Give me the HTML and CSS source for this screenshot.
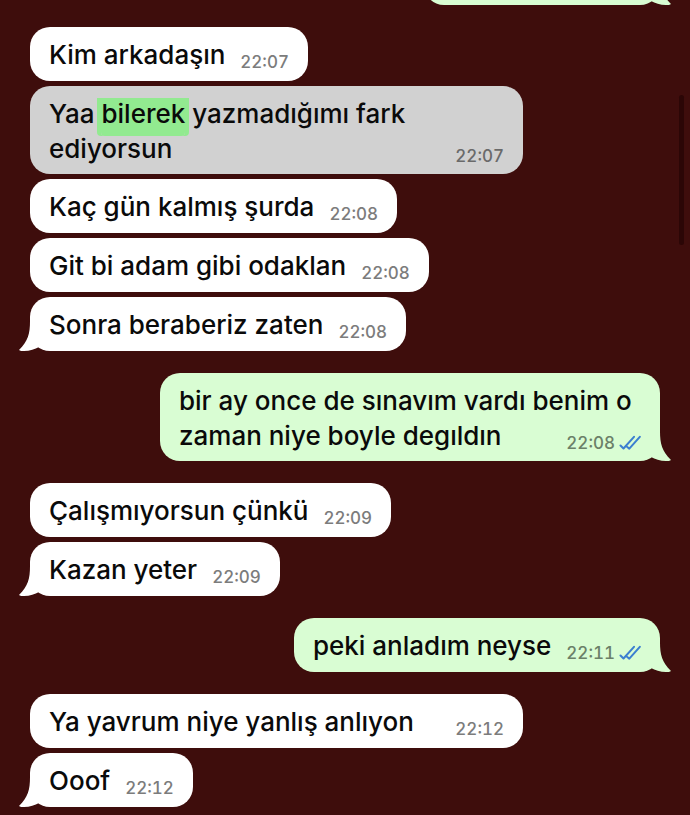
FILE: index.html
```
<!DOCTYPE html>
<html lang="tr">
<head>
    <meta charset="UTF-8" />
    <meta name="viewport" content="width=device-width, initial-scale=1.0" />
    <title>Sohbet</title>
    <link rel="stylesheet" href="styles.css">
</head>
<body>
    <svg class="defs" aria-hidden="true">
        <symbol id="ticks" viewBox="0 0 22 16">
            <path d="M1.5 10.5 L4.5 13.5 L15 1.8 M8.3 12 L10.3 13.7 L20.8 1.8" />
        </symbol>
    </svg>

    <main class="chat">
        <!-- Scrolled out message -->
        <div class="bubble sent tail scrolled" aria-hidden="true"></div>

        <div class="group">
            <div class="bubble">Kim arkadaşın<time>22:07</time></div>
            <div class="bubble selected">Yaa <mark>bilerek</mark> yazmadığımı fark ediyorsun<time>22:07</time></div>
            <div class="bubble">Kaç gün kalmış şurda<time>22:08</time></div>
            <div class="bubble">Git bi adam gibi odaklan<time>22:08</time></div>
            <div class="bubble tail">Sonra beraberiz zaten<time>22:08</time></div>
        </div>

        <div class="group">
            <div class="bubble sent tail">bir ay once de sınavım vardı benim o zaman niye boyle degıldın<time>22:08<svg class="ticks"><use href="#ticks" /></svg></time></div>
        </div>

        <div class="group">
            <div class="bubble">Çalışmıyorsun çünkü<time>22:09</time></div>
            <div class="bubble tail">Kazan yeter<time>22:09</time></div>
        </div>

        <div class="group">
            <div class="bubble sent tail">peki anladım neyse<time>22:11<svg class="ticks"><use href="#ticks" /></svg></time></div>
        </div>

        <div class="group">
            <div class="bubble wide">Ya yavrum niye yanlış anlıyon<time>22:12</time></div>
            <div class="bubble tail">Ooof<time>22:12</time></div>
        </div>
    </main>

    <div class="scrollbar"></div>
</body>
</html>
```

FILE: styles.css
```
* {
    box-sizing: border-box;
}

body {
    margin: 0;
    position: relative;
    overflow: hidden;
    background-color: #3e0d0c;
    color: #0a0a0a;
    font-family: Inter, "Liberation Sans", sans-serif;
    font-size: 26px;
    font-weight: 500;
    line-height: 35px;
}

.defs {
    display: none;
}

.chat {
    display: flex;
    flex-direction: column;
    gap: 22px;
    padding: 0 30px 9px;
}

.group {
    display: flex;
    flex-direction: column;
    align-items: flex-start;
    gap: 5px;
}

/* Message bubbles */
.bubble {
    position: relative;
    max-width: 493px;
    min-height: 54px;
    padding: 10px 19px 8px;
    border-radius: 20px;
    background-color: #fff;
}

.bubble.sent {
    align-self: flex-end;
    max-width: 500px;
    background-color: #d9fdd3;
}

.bubble.selected {
    background-color: #d1d1d1;
}

.bubble.wide {
    width: 493px;
}

.bubble.scrolled {
    width: 236px;
    margin-top: -49px;
}

/* Bubble tails */
.tail::after {
    content: "";
    position: absolute;
    left: -11px;
    bottom: 0;
    width: 30px;
    height: 30px;
    background-color: inherit;
    clip-path: path("M11 0 C11 13 9 20 0 29 C1 30 3 30 5 30 C11 30 16 28 20 26 L30 20 L30 0 Z");
}

.sent.tail::after {
    left: auto;
    right: -11px;
    transform: scaleX(-1);
}

/* Time and read ticks */
time {
    float: right;
    display: flex;
    align-items: center;
    gap: 4px;
    margin: 15px 0 0 15px;
    color: #7c7c7c;
    font-size: 17px;
    font-weight: 500;
    font-variant-numeric: tabular-nums;
    line-height: 20px;
}

.selected time {
    color: #6a6a6a;
}

.sent time {
    color: #6b8068;
}

.ticks {
    width: 22px;
    height: 16px;
    fill: none;
    stroke: #3b7fd0;
    stroke-width: 2;
    stroke-linecap: round;
    stroke-linejoin: round;
}

mark {
    padding: 0 0 7px;
    border-radius: 0 0 4px 4px;
    background-color: #92ea90;
    box-shadow: -4px 0 #92ea90, 4px 0 #92ea90;
    color: inherit;
}

.scrollbar {
    position: absolute;
    top: 95px;
    right: 6px;
    width: 5px;
    height: 150px;
    border-radius: 3px;
    background-color: #2b0606;
}
```
